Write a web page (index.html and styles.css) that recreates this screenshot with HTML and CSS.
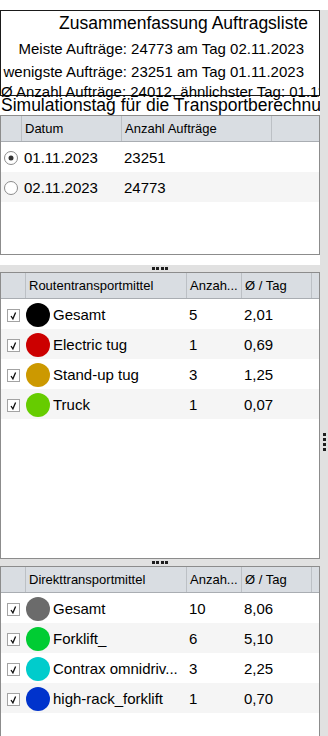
FILE: index.html
```html
<!DOCTYPE html>
<html>
<head>
	<title>Auftragsliste</title>
	<meta charset="utf-8">
	<link rel="stylesheet" href="styles.css">
</head>
<body>
<div class="window">
	<div class="main">
		<div class="summary">
			<p class="title">Zusammenfassung Auftragsliste</p>
			<p class="line2">Meiste Aufträge: 24773 am Tag 02.11.2023</p>
			<p class="line3">wenigste Aufträge: 23251 am Tag 01.11.2023</p>
			<p class="line4">Ø Anzahl Aufträge: 24012, ähnlichster Tag: 01.11.2023</p>
		</div>
		<p class="simlabel">Simulationstag für die Transportberechnung</p>

		<div class="table days">
			<div class="row head">
				<span></span><span>Datum</span><span>Anzahl Aufträge</span><span></span>
			</div>
			<div class="row">
				<span class="pick">
					<svg width="14" height="14" viewBox="0 0 14 14"><circle cx="7" cy="7" r="6.5" fill="white" stroke="#8a8a8a"/><circle cx="7" cy="7" r="2.5" fill="#333"/></svg>
				</span>
				<span class="cell">01.11.2023</span><span class="cell">23251</span><span></span>
			</div>
			<div class="row alt">
				<span class="pick">
					<svg width="14" height="14" viewBox="0 0 14 14"><circle cx="7" cy="7" r="6.5" fill="white" stroke="#8a8a8a"/></svg>
				</span>
				<span class="cell">02.11.2023</span><span class="cell">24773</span><span></span>
			</div>
		</div>

		<div class="handle"><i></i><i></i><i></i><i></i></div>

		<div class="table vehicles routes">
			<div class="row head">
				<span></span><span>Routentransportmittel</span><span>Anzah...</span><span>Ø / Tag</span><span></span>
			</div>
			<div class="row">
				<span class="box"><svg width="13" height="13" viewBox="0 0 13 13"><rect x="0.5" y="0.5" width="12" height="12" fill="white" stroke="#a3a3a3"/><path d="M4 7 L5.9 9.8 L8.6 3.4" fill="none" stroke="#111" stroke-width="1.3"/></svg></span>
				<span class="name"><i class="dot" style="background-color: #000000"></i>Gesamt</span>
				<span class="cell">5</span><span class="cell">2,01</span><span></span>
			</div>
			<div class="row alt">
				<span class="box"><svg width="13" height="13" viewBox="0 0 13 13"><rect x="0.5" y="0.5" width="12" height="12" fill="white" stroke="#a3a3a3"/><path d="M4 7 L5.9 9.8 L8.6 3.4" fill="none" stroke="#111" stroke-width="1.3"/></svg></span>
				<span class="name"><i class="dot" style="background-color: #cc0000"></i>Electric tug</span>
				<span class="cell">1</span><span class="cell">0,69</span><span></span>
			</div>
			<div class="row">
				<span class="box"><svg width="13" height="13" viewBox="0 0 13 13"><rect x="0.5" y="0.5" width="12" height="12" fill="white" stroke="#a3a3a3"/><path d="M4 7 L5.9 9.8 L8.6 3.4" fill="none" stroke="#111" stroke-width="1.3"/></svg></span>
				<span class="name"><i class="dot" style="background-color: #cc9900"></i>Stand-up tug</span>
				<span class="cell">3</span><span class="cell">1,25</span><span></span>
			</div>
			<div class="row alt">
				<span class="box"><svg width="13" height="13" viewBox="0 0 13 13"><rect x="0.5" y="0.5" width="12" height="12" fill="white" stroke="#a3a3a3"/><path d="M4 7 L5.9 9.8 L8.6 3.4" fill="none" stroke="#111" stroke-width="1.3"/></svg></span>
				<span class="name"><i class="dot" style="background-color: #66cc00"></i>Truck</span>
				<span class="cell">1</span><span class="cell">0,07</span><span></span>
			</div>
		</div>

		<div class="handle"><i></i><i></i><i></i><i></i></div>

		<div class="table vehicles direct">
			<div class="row head">
				<span></span><span>Direkttransportmittel</span><span>Anzah...</span><span>Ø / Tag</span><span></span>
			</div>
			<div class="row">
				<span class="box"><svg width="13" height="13" viewBox="0 0 13 13"><rect x="0.5" y="0.5" width="12" height="12" fill="white" stroke="#a3a3a3"/><path d="M4 7 L5.9 9.8 L8.6 3.4" fill="none" stroke="#111" stroke-width="1.3"/></svg></span>
				<span class="name"><i class="dot" style="background-color: #6b6b6b"></i>Gesamt</span>
				<span class="cell">10</span><span class="cell">8,06</span><span></span>
			</div>
			<div class="row alt">
				<span class="box"><svg width="13" height="13" viewBox="0 0 13 13"><rect x="0.5" y="0.5" width="12" height="12" fill="white" stroke="#a3a3a3"/><path d="M4 7 L5.9 9.8 L8.6 3.4" fill="none" stroke="#111" stroke-width="1.3"/></svg></span>
				<span class="name"><i class="dot" style="background-color: #00cc33"></i>Forklift_</span>
				<span class="cell">6</span><span class="cell">5,10</span><span></span>
			</div>
			<div class="row">
				<span class="box"><svg width="13" height="13" viewBox="0 0 13 13"><rect x="0.5" y="0.5" width="12" height="12" fill="white" stroke="#a3a3a3"/><path d="M4 7 L5.9 9.8 L8.6 3.4" fill="none" stroke="#111" stroke-width="1.3"/></svg></span>
				<span class="name"><i class="dot" style="background-color: #00cccc"></i>Contrax omnidriv...</span>
				<span class="cell">3</span><span class="cell">2,25</span><span></span>
			</div>
			<div class="row alt">
				<span class="box"><svg width="13" height="13" viewBox="0 0 13 13"><rect x="0.5" y="0.5" width="12" height="12" fill="white" stroke="#a3a3a3"/><path d="M4 7 L5.9 9.8 L8.6 3.4" fill="none" stroke="#111" stroke-width="1.3"/></svg></span>
				<span class="name"><i class="dot" style="background-color: #0033cc"></i>high-rack_forklift</span>
				<span class="cell">1</span><span class="cell">0,70</span><span></span>
			</div>
		</div>
	</div>
	<div class="side">
		<div class="vhandle"><i></i><i></i><i></i><i></i></div>
	</div>
</div>
</body>
</html>
```

FILE: styles.css
```css
* {
	padding: 0px;
	margin: 0px;
	box-sizing: border-box;
}
html, body {
	height: 736px;
	overflow: hidden;
	background-color: white;
	color: black;
	font-family: "Liberation Sans", Arial, sans-serif;
}
.window {
	display: flex;
	height: 736px;
}
.main {
	width: 320px;
	display: flex;
	flex-direction: column;
}
.side {
	flex: 1;
	margin-top: 10px;
	padding-top: 423px;
	padding-left: 3px;
	background-color: #e1e1e1;
}

/* summary box */
.summary {
	margin-top: 10px;
	height: 86px;
	border: 1px solid #1a1a1a;
	white-space: nowrap;
}
.summary p {
	text-align: right;
	font-size: 15px;
	padding-right: 15px;
}
.summary .title {
	font-size: 17.5px;
	line-height: 25px;
	padding-right: 11px;
}
.summary .line2 {
	line-height: 25px;
}
.summary .line3 {
	line-height: 22px;
}
.summary .line4 {
	text-align: left;
	height: 18px;
	line-height: 18px;
	padding-right: 0px;
	overflow: hidden;
}
.simlabel {
	height: 19px;
	line-height: 19px;
	font-size: 17.5px;
	padding-left: 1px;
	white-space: nowrap;
	overflow: hidden;
}

/* tables */
.table {
	border: 1px solid #8c8c8c;
	background-color: white;
	font-size: 15px;
}
.days {
	height: 140px;
	margin-bottom: 10px;
}
.routes {
	height: 287px;
}
.direct {
	flex: 1;
	border-bottom: none;
}
.row {
	display: grid;
	height: 30px;
	padding-top: 2px;
	align-items: center;
	line-height: 28px;
	white-space: nowrap;
}
.days .row {
	grid-template-columns: 21px 100px 150px 1fr;
}
.vehicles .row {
	grid-template-columns: 25px 161px 55px 70px 1fr;
}
.alt {
	background-color: #f5f5f5;
}
.head {
	height: 26px;
	padding-top: 1px;
	align-items: stretch;
	line-height: 24px;
	font-size: 13px;
	background-color: #d9dde2;
	border-bottom: 1px solid #a9adb2;
}
.head span {
	margin-top: -1px;
	padding-top: 1px;
	padding-left: 3px;
	border-right: 1px solid #bcc0c5;
	overflow: hidden;
}
.head span:last-child {
	border-right: none;
}
.cell {
	padding-left: 2px;
}
.pick {
	display: flex;
	align-items: center;
	padding-left: 3px;
}
.box {
	display: flex;
	align-items: center;
	padding-left: 6px;
}
.name {
	display: flex;
	align-items: center;
	gap: 3px;
}
.dot {
	width: 24px;
	height: 24px;
	border-radius: 50%;
	flex-shrink: 0;
}

/* splitter handles */
.handle {
	height: 7px;
	display: flex;
	justify-content: center;
	align-items: center;
	gap: 1.5px;
	background-color: #e1e1e1;
}
.handle i {
	width: 3px;
	height: 3px;
	background-color: #1e1e1e;
}
.vhandle {
	display: flex;
	flex-direction: column;
	gap: 2px;
}
.vhandle i {
	width: 3px;
	height: 3px;
	background-color: #1e1e1e;
}
```
